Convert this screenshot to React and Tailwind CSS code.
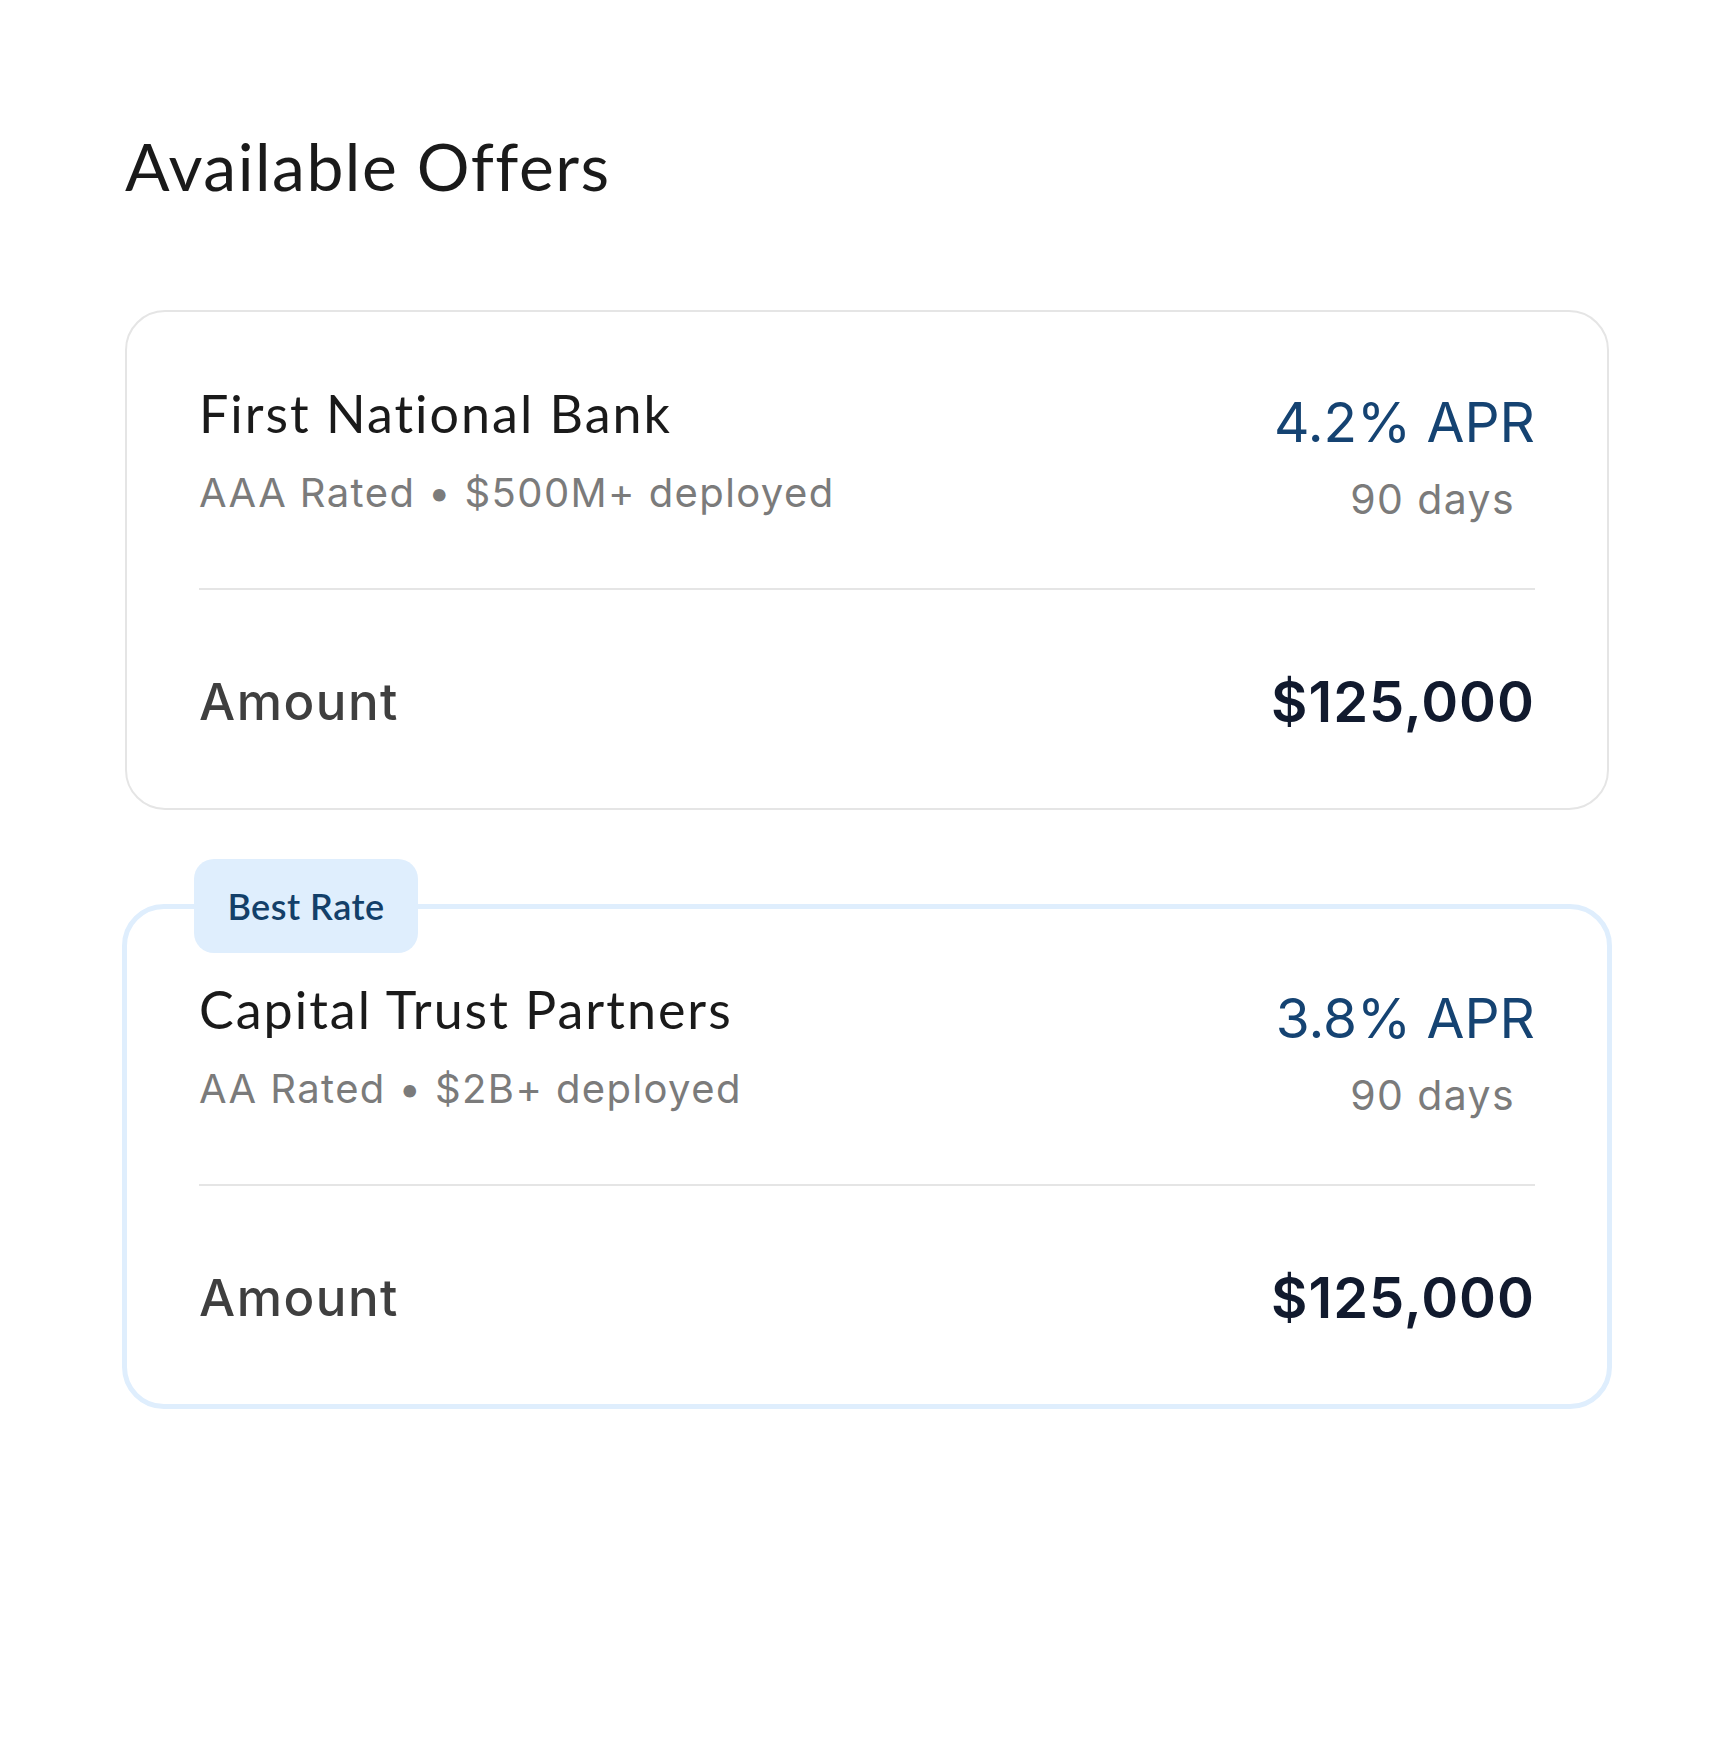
const offers = [
  { name: "First National Bank", meta: "AAA Rated • $500M+ deployed", apr: "4.2% APR", best: false },
  { name: "Capital Trust Partners", meta: "AA Rated • $2B+ deployed", apr: "3.8% APR", best: true },
];

function OfferCard({ o }) {
  return (
    <div
      className={
        o.best
          ? "relative -mx-[3px] rounded-[42px] border-[5px] border-[#dfeefd] bg-white px-[72px] pt-[72px] pb-[76px]"
          : "relative rounded-[40px] border-[2px] border-[#e5e5e5] bg-white px-[72px] pt-[73px] pb-[76px]"
      }
    >
      {o.best && (
        <div className="absolute left-[67px] top-[-50px] flex h-[94px] w-[224px] items-center justify-center rounded-[20px] bg-[#dfeefd] font-['Lato','Noto_Sans',sans-serif] text-[36px] font-semibold tracking-[0.5px] text-[#133f69]">
          Best Rate
        </div>
      )}
      <div className="flex items-start justify-between">
        <div>
          <div className="font-['Lato','Noto_Sans',sans-serif] text-[52px] leading-[56px] tracking-[2px] text-[#1a1a1a]">{o.name}</div>
          <div className="mt-[30px] font-['Inter','Noto_Sans',sans-serif] text-[40px] leading-[44px] tracking-[1.4px] text-[#7b7b7b]">{o.meta}</div>
        </div>
        <div className="flex flex-col items-end">
          <div className="mt-[7px] font-['Inter','Noto_Sans',sans-serif] text-[55px] leading-[60px] text-[#154372]">{o.apr}</div>
          <div className="mt-[25px] mr-[20px] font-['Inter','Noto_Sans',sans-serif] text-[41px] leading-[44px] tracking-[1.4px] text-[#7b7b7b]">90 days</div>
        </div>
      </div>
      <div className="mt-[67px] h-[2px] w-full bg-[#e5e5e5]" />
      <div className="mt-[82px] flex items-center justify-between font-['Inter','Noto_Sans',sans-serif]">
        <div className="text-[51px] leading-[60px] tracking-[1.5px] font-medium text-[#3f3f3f]">Amount</div>
        <div className="text-[56px] leading-[60px] tracking-[1px] font-semibold text-[#111a2e]">$125,000</div>
      </div>
    </div>
  );
}

export default function App() {
  return (
    <div className="min-h-[1737px] w-full bg-white px-[125px] pt-[126px]">
      <h1 className="font-['Lato','Noto_Sans',sans-serif] text-[66px] leading-[80px] tracking-[1.5px] text-[#1a1a1a] font-normal">
        Available Offers
      </h1>
      <div className="mt-[104px] flex flex-col gap-[94px]">
        {offers.map((o) => (
          <OfferCard key={o.name} o={o} />
        ))}
      </div>
    </div>
  );
}
